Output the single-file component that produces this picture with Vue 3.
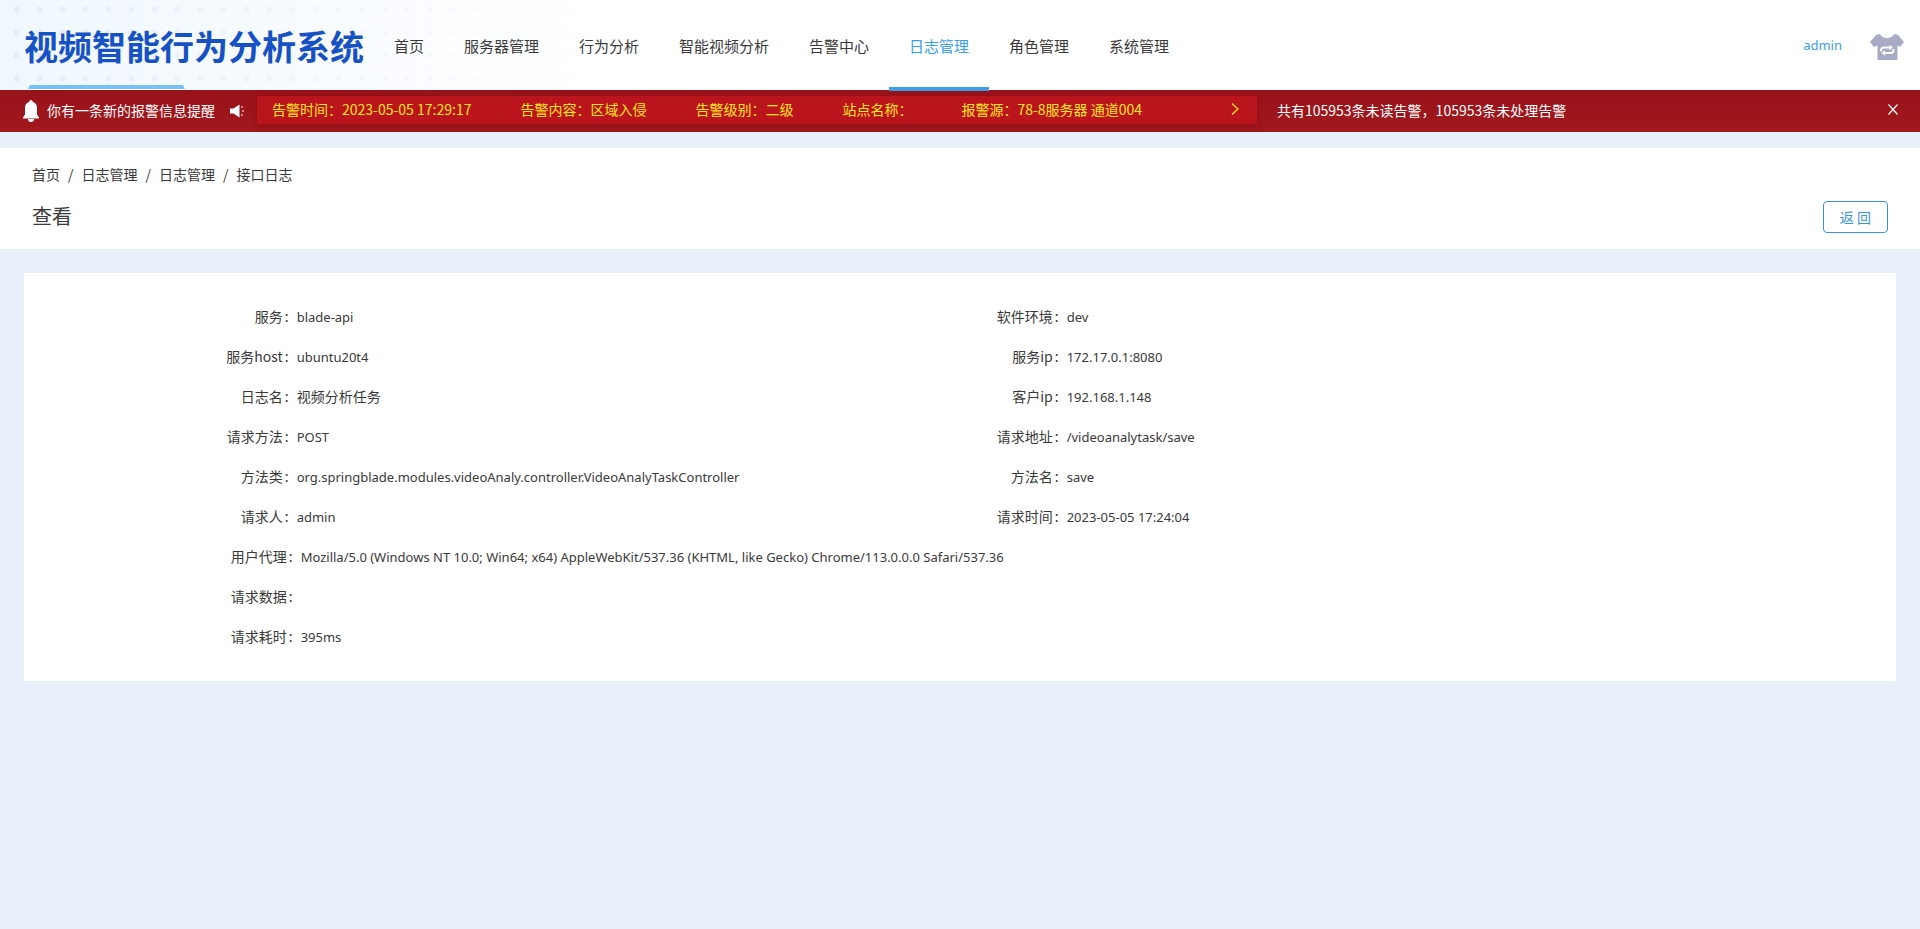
<script setup>
const menu = ['首页', '服务器管理', '行为分析', '智能视频分析', '告警中心', '日志管理', '角色管理', '系统管理']
const active = '日志管理'
const alarm = ['告警时间：2023-05-05 17:29:17', '告警内容：区域入侵', '告警级别：二级', '站点名称：', '报警源：78-8服务器 通道004']
const crumbs = ['首页', '日志管理', '日志管理', '接口日志']
const fields = [
  { label: '服务', value: 'blade-api' },
  { label: '软件环境', value: 'dev' },
  { label: '服务host', value: 'ubuntu20t4' },
  { label: '服务ip', value: '172.17.0.1:8080' },
  { label: '日志名', value: '视频分析任务' },
  { label: '客户ip', value: '192.168.1.148' },
  { label: '请求方法', value: 'POST' },
  { label: '请求地址', value: '/videoanalytask/save' },
  { label: '方法类', value: 'org.springblade.modules.videoAnaly.controller.VideoAnalyTaskController' },
  { label: '方法名', value: 'save' },
  { label: '请求人', value: 'admin' },
  { label: '请求时间', value: '2023-05-05 17:24:04' },
  { label: '用户代理', value: 'Mozilla/5.0 (Windows NT 10.0; Win64; x64) AppleWebKit/537.36 (KHTML, like Gecko) Chrome/113.0.0.0 Safari/537.36', wide: true },
  { label: '请求数据', value: '', wide: true },
  { label: '请求耗时', value: '395ms', wide: true }
]
const isLatin = (text) => /^[\x20-\x7e]+$/.test(text)
</script>

<template>
  <div class="page">
    <header class="header">
      <h1 class="brand">视频智能行为分析系统</h1>
      <nav class="nav">
        <a v-for="item in menu" :key="item" href="#" class="nav-item" :class="{ active: item === active }">{{ item }}</a>
      </nav>
      <a href="#" class="user latin">admin</a>
      <button type="button" class="theme" aria-label="切换主题">
        <svg width="34" height="26" viewBox="0 0 34 26">
          <path d="M10 0 C12 5.500 22 5.500 24 0 L28 1 L34 8 L30 13 L27.500 11.500 V26 H7.500 V11.500 L4 13 L0 8 L6 1 Z" fill="#a9abc6" />
          <g fill="none" stroke="#fff" stroke-width="1.800">
            <path d="M11 17.500 V16.500 Q11 13.500 14 13.500 H20" />
            <path d="M23.500 15 V16 Q23.500 19 20.500 19 H14.500" />
          </g>
          <path d="M19.500 10.800 L23 13.500 L19.500 16.200 Z M15 16.300 L11.500 19 L15 21.700 Z" fill="#fff" />
        </svg>
      </button>
    </header>

    <section class="alert">
      <svg width="16" height="22" viewBox="0 0 16 22" fill="#fff">
        <path d="M8 0 C9 0 9.700 .8 9.600 1.800 C12.500 2.600 14 5 14 8 V14.500 L16 17.500 V18.500 H0 V17.500 L2 14.500 V8 C2 5 3.500 2.600 6.400 1.800 C6.300 .8 7 0 8 0 Z M5 19 H11 C11 20.800 9.800 22 8 22 C6.200 22 5 20.800 5 19 Z" />
      </svg>
      <span class="notice">你有一条新的报警信息提醒</span>
      <svg class="speaker" width="15" height="14" viewBox="0 0 15 14" fill="#fff">
        <path d="M0 4.500 H3.500 L9.500 .5 V13.500 L3.500 9.500 H0 Z" />
        <path d="M11.500 3.500 L12.500 2.500 M12 7 H14 M11.500 10.500 L12.500 11.500" stroke="#fff" stroke-width="1.200" />
      </svg>
      <div class="ticker">
        <span v-for="text in alarm" :key="text">{{ text }}</span>
        <button type="button" class="next" aria-label="下一条">
          <svg width="8" height="12" viewBox="0 0 8 12"><path d="M1 .5 L7 6 L1 11.500" fill="none" stroke="#ffe61f" stroke-width="1.300" /></svg>
        </button>
      </div>
      <span class="summary">共有105953条未读告警，105953条未处理告警</span>
      <button type="button" class="close" aria-label="关闭">
        <svg width="10" height="11" viewBox="0 0 10 11"><path d="M.5 .5 L9.500 10.500 M9.500 .5 L.5 10.500" stroke="#fff" stroke-width="1.200" /></svg>
      </button>
    </section>

    <section class="page-head">
      <nav class="crumbs">
        <template v-for="(crumb, i) in crumbs" :key="i">
          <span v-if="i" class="slash">/</span><a href="#">{{ crumb }}</a>
        </template>
      </nav>
      <div class="title-row">
        <h2>查看</h2>
        <button type="button" class="back">返 回</button>
      </div>
    </section>

    <main class="card">
      <dl class="fields">
        <div v-for="field in fields" :key="field.label" class="field" :class="{ wide: field.wide }">
          <dt>{{ field.label }}</dt>
          <dd :class="{ latin: isLatin(field.value) }">{{ field.value }}</dd>
        </div>
      </dl>
    </main>
  </div>
</template>

<style>
body {
  background: #e8f0fa;
}
</style>

<style scoped>
.page {
  min-height: 100vh;
  color: #3a3a3a;
  font: 14px/22px "Noto Sans CJK SC", sans-serif;
}
.latin {
  font-family: "Noto Sans", "Noto Sans CJK SC", sans-serif;
  font-size: 13px;
}
a {
  color: inherit;
  text-decoration: none;
}
button {
  padding: 0;
  border: 0;
  background: none;
  font: inherit;
  cursor: pointer;
}
svg {
  display: block;
}
h1, h2, dl, dd {
  margin: 0;
}
.header {
  position: relative;
  display: flex;
  align-items: center;
  height: 90px;
  padding: 0 16px 0 24px;
  background: #fff;
}
.header::before {
  content: "";
  position: absolute;
  inset: 0 auto 0 0;
  width: 600px;
  background:
    linear-gradient(90deg, transparent, #fff),
    radial-gradient(circle, #e2ecf5 2px, transparent 4px) 5px -2px / 23px 23px,
    #f0f8ff;
}
.header::after {
  content: "";
  position: absolute;
  left: 28px;
  bottom: 1px;
  width: 157px;
  height: 4px;
  background: #74c2f8;
  clip-path: polygon(2px 0, calc(100% - 2px) 0, 100% 100%, 0 100%);
}
.brand {
  position: relative;
  margin-right: 10px;
  padding-top: 2px;
  color: #1752c4;
  font-size: 34px;
  line-height: 50px;
  white-space: nowrap;
}
.nav {
  position: relative;
  z-index: 1;
  display: flex;
  flex: 1;
}
.nav-item {
  height: 91px;
  padding: 0 20px;
  box-sizing: border-box;
  font-size: 15px;
  line-height: 92px;
  white-space: nowrap;
}
.nav-item.active {
  color: #3a9ee8;
  box-shadow: inset 0 -4px #3a9ee8;
}
.user {
  margin-right: 28px;
  color: #3a9ee8;
}
.theme {
  padding-top: 4px;
}
.alert {
  display: flex;
  align-items: center;
  height: 42px;
  padding: 0 22px 0 23px;
  background: linear-gradient(#98121a, #a1191d);
  color: #fff;
  line-height: 20px;
  white-space: nowrap;
}
.notice,
.summary {
  padding-bottom: 2px;
}
.notice {
  margin: 0 15px 0 8px;
}
.speaker {
  margin-right: 12px;
}
.ticker {
  display: flex;
  flex: 0 1 970px;
  align-items: center;
  gap: 49px;
  height: 28px;
  margin-bottom: 2px;
  padding: 0 15px;
  background: #ba151d;
  box-shadow: 0 1px 6px #8a1016;
  color: #ffe61f;
}
.ticker > span {
  padding-bottom: 2px;
}
.next {
  margin: 0 3px 2px auto;
}
.summary {
  margin-left: 20px;
}
.close {
  margin: 0 0 3px auto;
}
.page-head {
  margin-top: 16px;
  padding: 15px 32px 16px;
  background: #fff;
}
.crumbs {
  display: flex;
}
.slash {
  margin: 0 8px;
}
.title-row {
  display: flex;
  align-items: center;
  justify-content: space-between;
  margin-top: 16px;
}
h2 {
  padding-bottom: 2px;
  font-size: 20px;
  font-weight: 400;
  line-height: 30px;
}
.back {
  height: 32px;
  padding: 0 16px 1px;
  border: 1px solid #3a94dc;
  border-radius: 4px;
  background: #fff;
  color: #3a94dc;
}
.card {
  margin: 24px;
  padding: 23px 24px 25px;
  background: #fff;
}
.fields {
  display: grid;
  grid-template-columns: repeat(24, 1fr);
  column-gap: 24px;
}
.field {
  display: grid;
  grid-column: span 10;
  grid-template-columns: 1fr 2fr;
  align-items: baseline;
  height: 40px;
  line-height: 40px;
  white-space: nowrap;
}
.field:nth-child(odd) {
  grid-column: 1 / span 10;
}
.field.wide {
  grid-column: 1 / span 20;
  grid-template-columns: 1fr 5fr;
}
dt {
  text-align: right;
}
dt::after {
  content: ":";
  margin: 0 8px 0 2px;
}
</style>
